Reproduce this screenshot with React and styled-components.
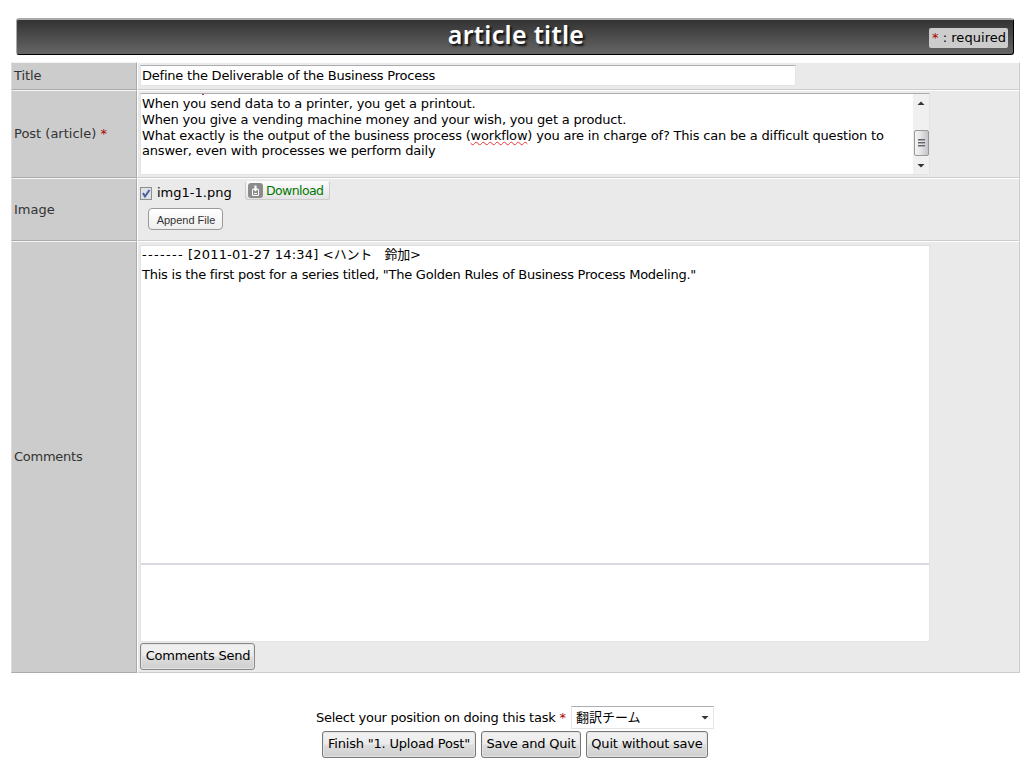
import React from "react"
import styled, { createGlobalStyle } from "styled-components"

const GlobalStyle = createGlobalStyle`
  * {
    box-sizing: border-box;
  }

  body {
    margin: 0;
    background: #fff;
    color: #000;
    font-family: "DejaVu Sans", "Noto Sans CJK JP", sans-serif;
    font-size: 13px;
    line-height: 16px;
  }
`

const Page = styled.main`
  width: 1032px;
  height: 767px;
  padding: 18px 12px 0 11px;
  overflow: hidden;
  white-space: nowrap;
`

const Header = styled.header`
  display: grid;
  grid-template-columns: 1fr auto 1fr;
  align-items: center;
  width: 998px;
  height: 37px;
  margin: 0 0 7px 5px;
  padding-right: 5px;
  border: 1px solid #000;
  border-top: 2px solid #aaa;
  border-left-color: #aaa;
  border-radius: 3px;
  background: linear-gradient(#333, #666);

  h1 {
    grid-column: 2;
    margin: -6px 0 0 7px;
    color: #fff;
    font-family: "Noto Sans", sans-serif;
    font-size: 25px;
    font-weight: 600;
    line-height: 30px;
    letter-spacing: 0.3px;
    text-shadow: 2px 2px 2px #111;
  }
`

const Required = styled.span`
  color: #a00;
`

const Legend = styled.div`
  justify-self: end;
  width: 79px;
  height: 20px;
  margin-top: 2px;
  padding: 2px 3px;
  border-radius: 2px;
  background: #ccc;
`

const Text = styled.span`
  letter-spacing: ${props => props.$spacing || "0"};
`

const Row = styled.div`
  display: grid;
  grid-template-columns: 126px 1fr;
  width: 1009px;
  height: ${props => props.$height}px;
`

const Label = styled.div`
  display: flex;
  align-items: center;
  padding-left: 2px;
  border: 1px solid #aaa;
  border-top-color: #f4f4f4;
  border-left-color: #ddd;
  background: #ccc;
  color: #333;
`

const Cell = styled.div`
  padding: ${props => props.$padding || "2px"};
  border: 1px solid #ccc;
  border-top-color: #fff;
  border-left-color: #fff;
  background: #eaeaea;
`

const Field = styled.div`
  width: ${props => props.$width || 790}px;
  height: ${props => props.$height}px;
  padding: ${props => props.$padding || "2px 1px"};
  border: 1px solid #e3e3ea;
  border-top: 1px solid #abadb3;
  border-radius: 1px;
  background: #fff;
  overflow: hidden;
`

const PostField = styled(Field)`
  display: flex;
  justify-content: space-between;
  padding: 0;
`

const PostText = styled.div`
  padding-left: 1px;

  &::before {
    content: "";
    display: block;
    width: 2px;
    height: 1px;
    margin: 0 0 1px 60px;
    background: #a33;
  }

  p {
    margin: 0;
    height: 16px;
    letter-spacing: -0.19px;
  }

  p:first-child {
    letter-spacing: -0.15px;
  }

  p:last-child {
    margin-top: -1px;
  }
`

const Misspelled = styled.span`
  text-decoration: underline wavy #e33 1px;
  text-decoration-skip-ink: none;
  text-underline-offset: 1px;
`

const ScrollBar = styled.div`
  display: flex;
  flex-direction: column;
  align-items: center;
  width: 16px;
  padding: 7px 0 6px;
  background: #f0f0f1;
`

const Thumb = styled.div`
  display: flex;
  flex-direction: column;
  align-items: center;
  justify-content: center;
  gap: 1px;
  width: 15px;
  height: 26px;
  margin: auto 0 8px;
  border: 1px solid #999;
  border-radius: 2px;
  background: linear-gradient(90deg, #f5f5f5, #e4e4e6 45%, #c4c5c9);

  i {
    width: 7px;
    height: 2px;
    border-top: 1px solid #666;
    background: #aaa;
  }
`

const FileRow = styled.div`
  display: flex;
  height: 26px;
`

const CheckBox = styled.svg`
  margin: 6px 5px 0 0;
`

const FileName = styled(Text)`
  width: 88px;
  padding-top: 4px;
`

const Download = styled.div`
  display: flex;
  gap: 3px;
  width: 85px;
  height: 19px;
  padding: 1px 2px 0;
  border: 1px solid #ccc;
  border-top-color: #fafafa;
  border-radius: 3px;
  background: linear-gradient(#fcfcfc, #e4e4e4);
  color: #070;
  font-size: 12.5px;

  svg {
    flex: none;
  }
`

const AppendButton = styled.button`
  display: block;
  width: 75px;
  height: 22px;
  margin: 1px 0 0 8px;
  padding: 2px 0 0 1px;
  border: 1px solid #999;
  border-radius: 4px;
  background: linear-gradient(#fff, #eee);
  color: #333;
  font: 11px/17px "Liberation Sans", sans-serif;
`

const CommentLog = styled(Field)`
  border-top-color: #ddd;
  border-bottom: 1px solid #d8d8df;
  line-height: 18px;

  p {
    margin: 0;
    height: 20px;
  }
`

const CommentInput = styled(Field)`
  border-top-color: #d8d8df;
`

const Button = styled.button`
  width: ${props => props.$width}px;
  height: 27px;
  padding: 0 0 2px;
  border: 1px solid #777;
  border-radius: 3px;
  background: linear-gradient(#f2f2f2, #ebebeb 48%, #ddd 52%, #cfcfcf);
  box-shadow: inset 0 0 0 1px #e4e4e4;
  color: #000;
  font: 13px/16px "DejaVu Sans", sans-serif;
  letter-spacing: -0.2px;
`

const SendButton = styled(Button)`
  display: block;
  margin-top: 1px;
  padding: 0 0 1px 1px;
  border-color: #888;
`

const Position = styled.div`
  display: flex;
  align-items: center;
  height: 23px;
  margin: 33px 0 0 305px;
`

const PositionLabel = styled.div`
  width: 255px;
`

const Select = styled.div`
  display: flex;
  align-items: center;
  justify-content: space-between;
  width: 143px;
  height: 23px;
  padding: 0 4px;
  border: 1px solid #e3e3ea;
  border-top-color: #abadb3;
`

const Actions = styled.div`
  display: flex;
  gap: 5px;
  margin: 2px 0 0 311px;
`

const Arrow = ({ up }) => (
  <svg width="8" height="4" viewBox="0 0 8 4">
    <path d={up ? "M0.5 4L4 0.5L7.5 4Z" : "M0.5 0H7.5L4 3.5Z"} fill="#333" />
  </svg>
)

const DownloadIcon = () => (
  <svg width="15" height="15" viewBox="0 0 15 15">
    <rect width="15" height="15" rx="3" fill="#8c8c8c" />
    <path d="M5.5 6.5H4.5V12.5H10.5V6.5H9.5M6 10.5H9" fill="none" stroke="#fff" />
    <path d="M6.5 2.5H8.5V5.5H10.5L7.5 8.5L4.5 5.5H6.5Z" fill="#fff" />
  </svg>
)

export default function App() {
  return (
    <Page>
      <GlobalStyle />
      <Header>
        <h1>article title</h1>
        <Legend>
          <Required>*</Required> <Text $spacing="0.05px">: required</Text>
        </Legend>
      </Header>
      <Row $height={28}>
        <Label>
          <Text $spacing="-0.1px">Title</Text>
        </Label>
        <Cell>
          <Field $width={656} $height={21}>
            <Text $spacing="-0.22px">
              Define the Deliverable of the Business Process
            </Text>
          </Field>
        </Cell>
      </Row>
      <Row $height={88}>
        <Label>
          <Text>
            Post (article) <Required>*</Required>
          </Text>
        </Label>
        <Cell>
          <PostField $height={82}>
            <PostText>
              <p>When you send data to a printer, you get a printout.</p>
              <p>When you give a vending machine money and your wish, you get a product.</p>
              <p>
                What exactly is the output of the business process (
                <Misspelled>workflow</Misspelled>) you are in charge of? This
                can be a difficult question to
              </p>
              <p>answer, even with processes we perform daily</p>
            </PostText>
            <ScrollBar>
              <Arrow up />
              <Thumb>
                <i />
                <i />
                <i />
              </Thumb>
              <Arrow />
            </ScrollBar>
          </PostField>
        </Cell>
      </Row>
      <Row $height={63}>
        <Label>Image</Label>
        <Cell>
          <FileRow>
            <CheckBox width="12" height="13" viewBox="0 0 12 13">
              <rect x="0.5" y="0.5" width="11" height="12" fill="#dde1e8" stroke="#8e8f8f" />
              <path d="M3 6L5 9.5L9.5 3" fill="none" stroke="#4b5f97" strokeWidth="2" />
            </CheckBox>
            <FileName>img1-1.png</FileName>
            <Download>
              <DownloadIcon />
              <Text $spacing="-0.6px">Download</Text>
            </Download>
          </FileRow>
          <AppendButton>Append File</AppendButton>
        </Cell>
      </Row>
      <Row $height={432}>
        <Label>
          <Text $spacing="-0.25px">Comments</Text>
        </Label>
        <Cell $padding="3px 2px 0">
          <CommentLog $height={319} $padding="0 1px">
            <p>
              <Text $spacing="1.3px">-------</Text>{" "}
              <Text $spacing="0.17px">[2011-01-27 14:34] &lt;</Text>
              <Text $spacing="-0.3px">ハント　鈴加&gt;</Text>
            </p>
            <p>
              <Text $spacing="-0.235px">
                This is the first post for a series titled, "The Golden Rules of Business Process Modeling."
              </Text>
            </p>
          </CommentLog>
          <CommentInput $height={78} />
          <SendButton $width={115}>Comments Send</SendButton>
        </Cell>
      </Row>
      <Position>
        <PositionLabel>
          <Text $spacing="-0.25px">Select your position on doing this task</Text>{" "}
          <Required>*</Required>
        </PositionLabel>
        <Select>
          翻訳チーム
          <Arrow />
        </Select>
      </Position>
      <Actions>
        <Button $width={154}>Finish "1. Upload Post"</Button>
        <Button $width={100}>Save and Quit</Button>
        <Button $width={122}>Quit without save</Button>
      </Actions>
    </Page>
  )
}
